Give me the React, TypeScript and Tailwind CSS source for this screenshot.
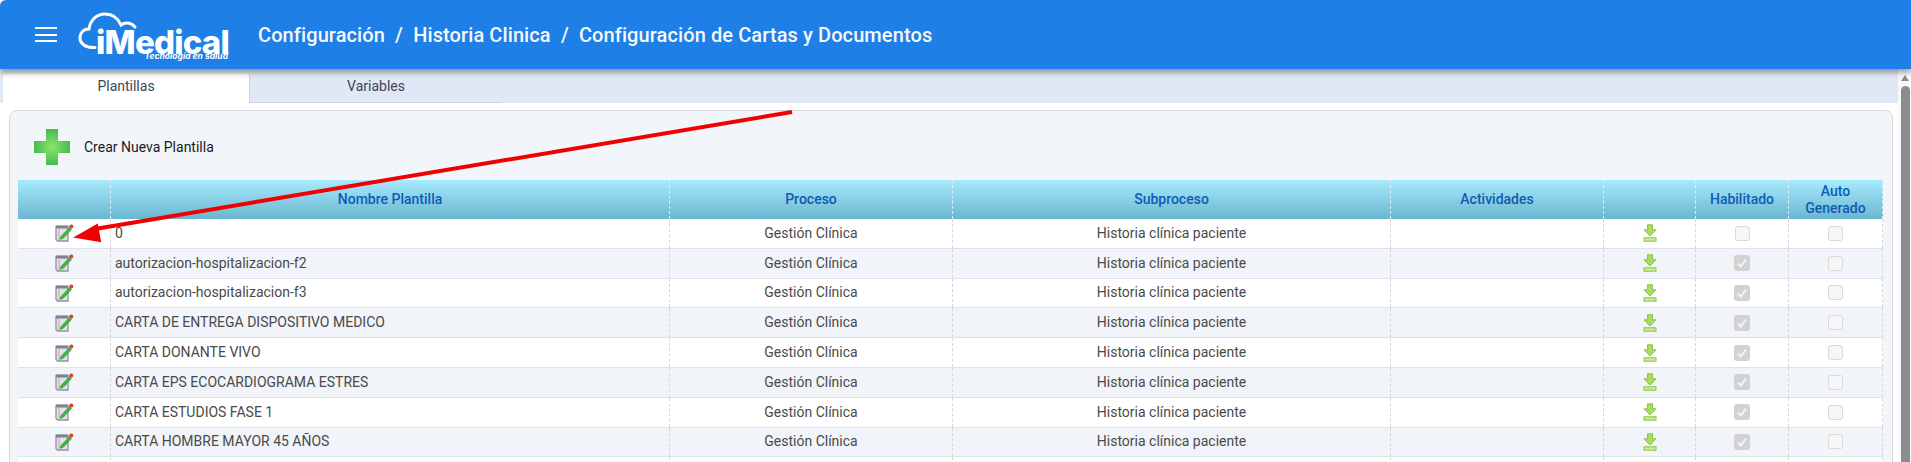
const rows: [string, boolean][] = [
  ["0", false],
  ["autorizacion-hospitalizacion-f2", true],
  ["autorizacion-hospitalizacion-f3", true],
  ["CARTA DE ENTREGA DISPOSITIVO MEDICO", true],
  ["CARTA DONANTE VIVO", true],
  ["CARTA EPS ECOCARDIOGRAMA ESTRES", true],
  ["CARTA ESTUDIOS FASE 1", true],
  ["CARTA HOMBRE MAYOR 45 AÑOS", true],
  ["", true],
];

const GRID = "grid grid-cols-[93px_559px_283px_438px_213px_92px_93px_94px]";
const CELL = "flex items-center justify-center border-r border-dashed border-[#d6d9dc]";

function EditIcon() {
  return (
    <svg width="19" height="18" viewBox="0 0 19 18">
      <path d="M1 2.5h12v14.5H2.500L1 15.500z" fill="#dfe3ea" stroke="#8d93a0" strokeWidth="1.300" />
      <rect x="1" y="1.500" width="12" height="3" fill="#7d828c" />
      <path d="M4 5v11" stroke="#e59a9a" strokeWidth="1" />
      <path d="M6 12.500 14.500 3.500l2 2L8 14.500l-3 .8z" fill="#43b53e" stroke="#2c8c2c" strokeWidth=".6" />
      <circle cx="16.300" cy="2.600" r="2" fill="#e0392f" />
    </svg>
  );
}

function DownloadIcon() {
  return (
    <svg width="14" height="18" viewBox="0 0 14 18">
      <path d="M4.500.8h5v5h3.500L7 12 1 5.800h3.500z" fill="#a9dc62" stroke="#8cc44a" strokeWidth="1" />
      <rect x="1" y="13.800" width="12" height="3.400" fill="#c9ec94" stroke="#8cc44a" strokeWidth="1" />
    </svg>
  );
}

function Checkbox({ checked }: { checked: boolean }) {
  return checked ? (
    <span className="flex h-4 w-4 items-center justify-center rounded-[3px] bg-[#d2d2d2]">
      <svg width="12" height="12" viewBox="0 0 12 12">
        <path d="M2 6.500 4.800 9.500 10 2.500" fill="none" stroke="#f4f4f4" strokeWidth="2" />
      </svg>
    </span>
  ) : (
    <span className="h-[15px] w-[15px] rounded-[3px] border border-[#d9d9d9] bg-[#f6f6f6]" />
  );
}

function Logo() {
  return (
    <div className="relative ml-[21px] h-[50px] w-[152px] text-white">
      <svg className="absolute left-0 top-0" width="80" height="46" viewBox="0 0 80 46">
        <path
          d="M17 37.500C7 38 1.500 33 2 27c.5-5 4-8 9-8 1-9 8-15 16-15 7 0 13 4 16 11 4-3 10-3 14 2"
          fill="none"
          stroke="white"
          strokeWidth="3"
          strokeLinecap="round"
        />
      </svg>
      <span className="absolute left-[18px] top-[12px] font-['Inter',sans-serif] text-[33px] font-extrabold leading-[40px] tracking-[-0.8px]">
        iMedical
      </span>
      <span className="absolute right-[2px] top-[40px] font-['Inter',sans-serif] text-[8.500px] font-bold italic leading-[12px]">
        Tecnología en salud
      </span>
    </div>
  );
}

export default function App() {
  return (
    <div className="relative h-[462px] overflow-hidden bg-white font-['Roboto',sans-serif] text-[14px] text-[#4a4a4a]">
      <header className="relative z-10 flex h-[69px] items-center rounded-tl-[6px] bg-[#1e7fe6] pl-[35px] shadow-[0_3px_6px_rgba(60,60,70,0.55)]">
        <div className="flex w-[22px] flex-col gap-[4.600px]">
          <span className="h-[2px] bg-white" />
          <span className="h-[2px] bg-white" />
          <span className="h-[2px] bg-white" />
        </div>
        <Logo />
        <div className="ml-[28px] whitespace-pre text-[20px] font-medium tracking-[0.1px] text-[#f4f8fd]">
          Configuración  /  Historia Clinica  /  Configuración de Cartas y Documentos
        </div>
      </header>

      <div className="flex">
        <div className="min-w-0 flex-1">
          <div className="flex h-[34px] items-end bg-[#dfe8f4] pl-[3px]">
            <div className="flex h-[29px] w-[247px] items-center justify-center rounded-t-[3px] border-r border-[#c9d3e0] bg-white pb-[4px] text-[#3c4654]">
              Plantillas
            </div>
            <div className="flex h-[29px] w-[252px] items-center justify-center border-b border-[#c9d5e6] pb-[4px] text-[#3c4654]">
              Variables
            </div>
          </div>

          <div className="ml-[9px] mr-[5px] mt-[7px] h-[400px] rounded-t-[8px] border border-[#d4d6d9] bg-[#f2f5f9] pl-[8px] pr-[9px]">
            <div className="flex h-[69px] items-center pl-[15px] pt-[3px]">
              <svg width="38" height="38" viewBox="0 0 38 38" className="blur-[0.6px]">
                <defs>
                  <radialGradient id="plusGrad" cx="50%" cy="50%" r="55%">
                    <stop offset="0%" stopColor="#8fe36f" />
                    <stop offset="100%" stopColor="#3fb84a" />
                  </radialGradient>
                </defs>
                <path d="M13 1h12v12h12v12H25v12H13V25H1V13h12z" fill="url(#plusGrad)" />
              </svg>
              <span className="ml-[13px] text-[#1b1b1b]">Crear Nueva Plantilla</span>
            </div>

            <div className={`${GRID} h-[39px] bg-gradient-to-b from-[#a6eafd] to-[#6bb6d0] text-center font-medium leading-[17px] text-[#0f5cb4]`}>
              <div className={`${CELL} border-[#d9eef5]`} />
              <div className={`${CELL} border-[#d9eef5]`}>Nombre Plantilla</div>
              <div className={`${CELL} border-[#d9eef5]`}>Proceso</div>
              <div className={`${CELL} border-[#d9eef5]`}>Subproceso</div>
              <div className={`${CELL} border-[#d9eef5]`}>Actividades</div>
              <div className={`${CELL} border-[#d9eef5]`} />
              <div className={`${CELL} border-[#d9eef5]`}>Habilitado</div>
              <div className={`${CELL} border-[#d9eef5]`}>
                Auto
                <br />
                Generado
              </div>
            </div>

            {rows.map(([name, enabled], i) => (
              <div
                key={i}
                className={`${GRID} h-[29.800px] border-b border-[#dfe2e7] ${i % 2 === 0 ? "bg-white" : "bg-[#f1f4f9]"}`}
              >
                <div className={CELL}>
                  <EditIcon />
                </div>
                <div className={`${CELL} justify-start pl-[4px]`}>{name}</div>
                <div className={CELL}>Gestión Clínica</div>
                <div className={CELL}>Historia clínica paciente</div>
                <div className={CELL} />
                <div className={CELL}>
                  <DownloadIcon />
                </div>
                <div className={CELL}>
                  <Checkbox checked={enabled} />
                </div>
                <div className={CELL}>
                  <Checkbox checked={false} />
                </div>
              </div>
            ))}
          </div>
        </div>

        <div className="flex h-[393px] w-[13px] shrink-0 flex-col items-center bg-[#f8f9fb] pl-[1px] pt-[6px]">
          <span className="h-0 w-0 border-x-[4px] border-b-[6px] border-x-transparent border-b-[#8c8c8c]" />
          <span className="mt-[5px] h-[380px] w-[9px] rounded-t-[5px] bg-[#8c8c8c]" />
        </div>
      </div>

      <svg className="pointer-events-none absolute left-[70px] top-[105px] z-20" width="730" height="145" viewBox="0 0 730 145">
        <path d="M722 7 25 124" stroke="#f00000" strokeWidth="4" fill="none" />
        <path d="M6 132 27 120 30 136z" fill="#f00000" stroke="#f00000" strokeWidth="2" />
      </svg>
    </div>
  );
}
